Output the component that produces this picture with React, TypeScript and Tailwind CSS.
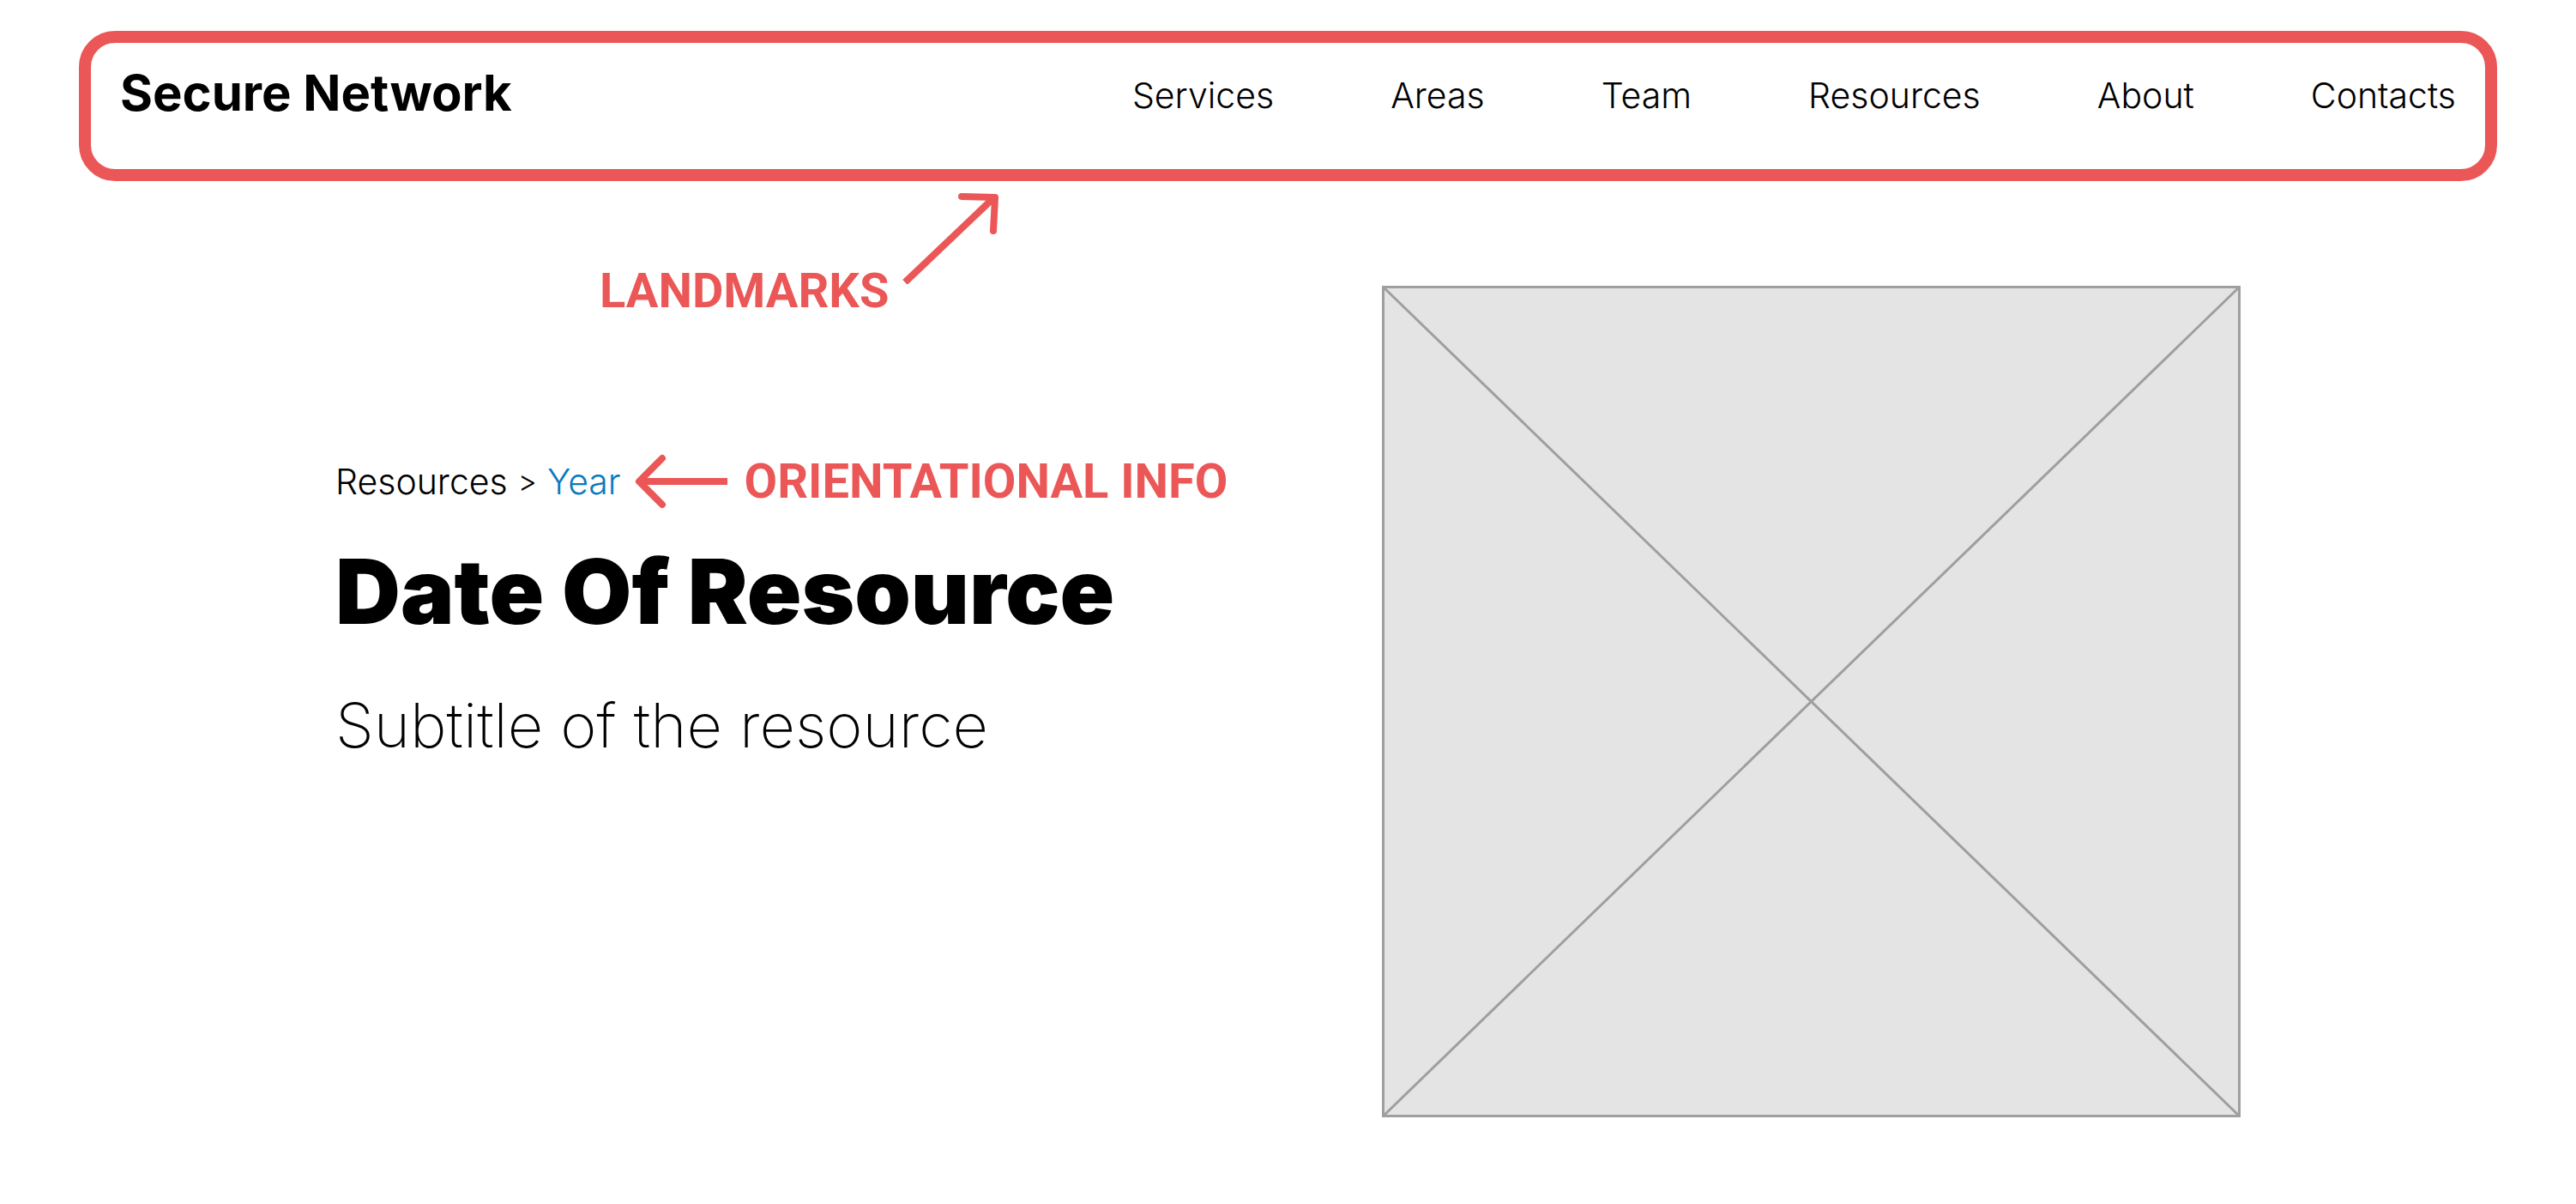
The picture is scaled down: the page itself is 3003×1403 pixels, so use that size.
const navItems = ["Services", "Areas", "Team", "Resources", "About", "Contacts"];

function ArrowUpRight() {
  return (
    <svg width="114" height="108" viewBox="0 0 114 108" fill="none" stroke="currentColor" strokeWidth="8" aria-hidden="true">
      <path d="M3 106 107 7" />
      <path d="M69 6 108 7 106 46" strokeLinecap="round" strokeLinejoin="round" />
    </svg>
  );
}

function ArrowLeft() {
  return (
    <svg width="108" height="64" viewBox="0 0 108 64" fill="none" stroke="currentColor" strokeWidth="8" aria-hidden="true">
      <path d="M6 32H108" />
      <path d="M32 5 5 32 32 59" strokeLinecap="round" strokeLinejoin="round" />
    </svg>
  );
}

export default function App() {
  return (
    <div className="bg-white px-[92px] pt-9 pb-[101px] font-['Inter',sans-serif] text-black">
      <header className="flex h-[175px] items-start justify-between rounded-[42px] border-[14px] border-[#eb5757] px-[34px] pt-[22px]">
        <a href="#" className="text-[58px] leading-[72px] font-bold whitespace-nowrap">
          Secure Network
        </a>
        <nav aria-label="Main" className="pt-[3px]">
          <ul className="flex gap-[136px]">
            {navItems.map((item) => (
              <li key={item}>
                <a href="#" className="text-[41px] leading-[72px] font-light">
                  {item}
                </a>
              </li>
            ))}
          </ul>
        </nav>
      </header>

      <main className="grid grid-cols-[1220fr_1001fr] px-[299px]">
        <section>
          <div className="flex items-start gap-4 pt-3 pl-[308px] text-[#eb5757]">
            <p className="pt-[84px] font-['Roboto',sans-serif] text-[56px] leading-[64px] font-bold">LANDMARKS</p>
            <ArrowUpRight />
          </div>

          <div className="flex items-center gap-4 pt-[158px]">
            <nav aria-label="Breadcrumb" className="flex gap-3 text-[41px] leading-[64px] font-light whitespace-nowrap">
              <a href="#">Resources</a>
              <span className="text-[34px]">&gt;</span>
              <a href="#" aria-current="page" className="text-[#0a7abf]">
                Year
              </a>
            </nav>
            <p className="flex items-center gap-5 font-['Roboto',sans-serif] text-[56px] leading-[64px] font-bold whitespace-nowrap text-[#eb5757]">
              <ArrowLeft />
              ORIENTATIONAL INFO
            </p>
          </div>

          <h1 className="pt-7 text-[105px] leading-[136px] font-black whitespace-nowrap">Date Of Resource</h1>
          <p className="pt-10 text-[72px] leading-[96px] font-extralight">Subtitle of the resource</p>
        </section>

        <figure className="mt-[122px] aspect-[1001/969] self-start border-[3px] border-[#9f9f9f] bg-[#e4e4e4]">
          <svg className="block h-full w-full" viewBox="0 0 100 100" preserveAspectRatio="none" role="img" aria-label="Image placeholder">
            <path d="M0 0 100 100M100 0 0 100" stroke="#9f9f9f" strokeWidth="3" vectorEffect="non-scaling-stroke" />
          </svg>
        </figure>
      </main>
    </div>
  );
}
